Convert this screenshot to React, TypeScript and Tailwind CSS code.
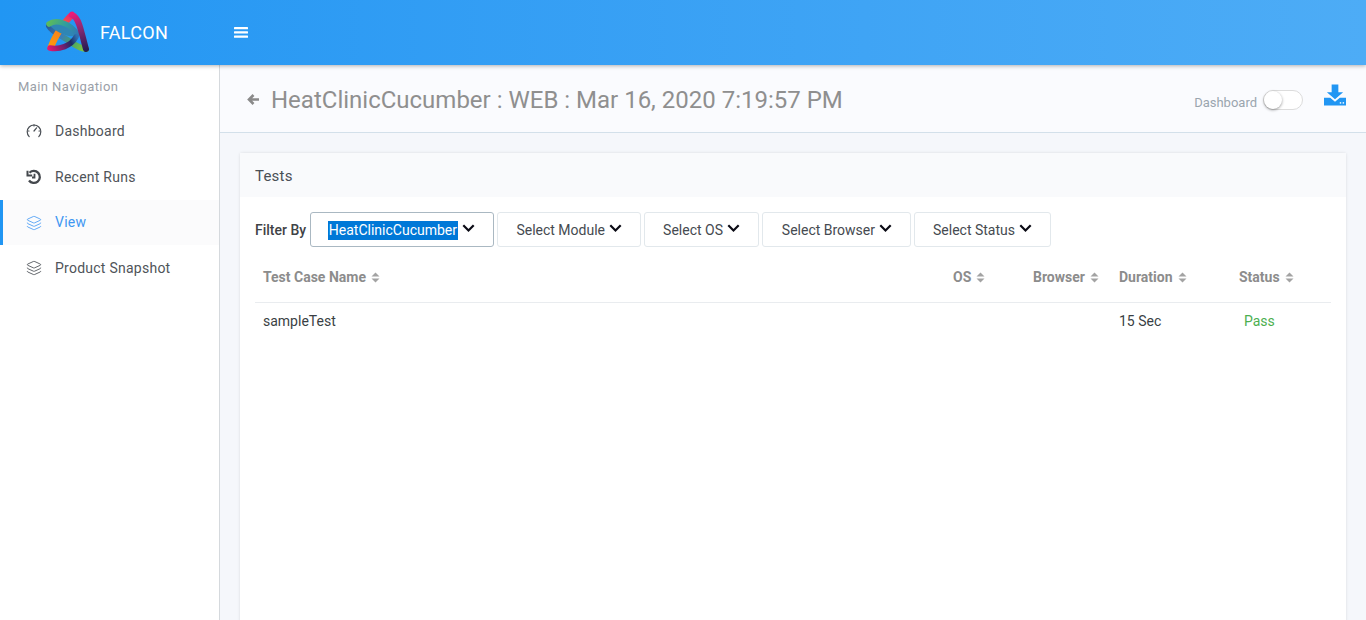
import { Layers } from "lucide-react";

function Logo() {
  return (
    <svg width="46" height="44" viewBox="0 0 46 44" fill="none" strokeLinecap="round">
      <defs>
        <linearGradient id="a" gradientUnits="userSpaceOnUse" x1="5" y1="36" x2="27" y2="3">
          <stop offset="0" stopColor="#ff9a0c" />
          <stop offset="0.5" stopColor="#f5811f" />
          <stop offset="1" stopColor="#ec1b78" />
        </linearGradient>
        <linearGradient id="b" gradientUnits="userSpaceOnUse" x1="27" y1="3" x2="42" y2="40">
          <stop offset="0" stopColor="#ec1b78" />
          <stop offset="0.4" stopColor="#8c2a73" />
          <stop offset="1" stopColor="#1f1b52" />
        </linearGradient>
        <linearGradient id="c" gradientUnits="userSpaceOnUse" x1="3" y1="12" x2="33" y2="27">
          <stop offset="0" stopColor="#5dbb5a" />
          <stop offset="0.5" stopColor="#2f9d9f" />
          <stop offset="1" stopColor="#3273b8" />
        </linearGradient>
        <linearGradient id="d" gradientUnits="userSpaceOnUse" x1="3" y1="14" x2="40" y2="38">
          <stop offset="0" stopColor="#2a5a98" />
          <stop offset="0.4" stopColor="#3a7fb8" />
          <stop offset="0.65" stopColor="#45a06a" />
          <stop offset="1" stopColor="#7cc63f" />
        </linearGradient>
        <linearGradient id="e" gradientUnits="userSpaceOnUse" x1="4" y1="38" x2="32" y2="26">
          <stop offset="0" stopColor="#e3176f" />
          <stop offset="0.45" stopColor="#74206f" />
          <stop offset="0.75" stopColor="#1d2c63" />
          <stop offset="1" stopColor="#2f6fb0" />
        </linearGradient>
      </defs>
      <path d="M4 15C7 21 17 25 24 30C30 34 34 37 41 38" stroke="url(#d)" strokeWidth="6" />
      <path d="M6 36C10 25 20 10 27 4" stroke="url(#a)" strokeWidth="6.500" />
      <path d="M4 14C12 10 26 14 32 24C26 28 12 22 4 14Z" fill="#2f86b4" />
      <path d="M4 13C11 8 25 12 32 23" stroke="url(#c)" strokeWidth="5.500" />
      <path d="M5 37C14 39 26 35 31 26" stroke="url(#e)" strokeWidth="5.500" />
      <path d="M27 4C33 6 35 16 37 23C39 30 40 35 41 38" stroke="url(#b)" strokeWidth="6" />
    </svg>
  );
}

function Gauge() {
  return (
    <svg width="16" height="16" viewBox="0 0 16 16" fill="none" stroke="#4a4f55" strokeWidth="1.200" strokeLinecap="round">
      <path d="M3.200 13.600A6.800 6.800 0 1 1 12.800 13.600" />
      <path d="M8 8L10.600 4.800" />
      <path d="M1.800 8H3M13 8h1.200M8 1.800V3" />
    </svg>
  );
}

function HistoryIcon() {
  return (
    <svg width="16" height="16" viewBox="0 0 16 16" fill="none" stroke="#44484d" strokeWidth="2.300">
      <path d="M3.500 3.800A6 6 0 1 1 3 11.500" />
      <path d="M1.500 1.800V6.500H6.200" strokeWidth="2" />
      <path d="M8.500 4.800V8.500H6" strokeWidth="1.800" />
    </svg>
  );
}

function Chevron() {
  return (
    <svg width="13" height="9" viewBox="0 0 13 9" fill="none" className="shrink-0">
      <path d="M1.300 1.300L6.500 6.500L11.700 1.300" stroke="#0a0a14" strokeWidth="2.200" />
    </svg>
  );
}

function Sort() {
  return (
    <svg width="9" height="11" viewBox="0 0 9 11" className="ml-[5px] inline-block align-[-1px]" fill="#a3a3a3">
      <path d="M4.500 0.500L8.500 4.500H0.500Z" />
      <path d="M4.500 10.500L8.500 6.500H0.500Z" />
    </svg>
  );
}

function NavItem({ icon, label, active }: { icon: React.ReactNode; label: string; active?: boolean }) {
  return (
    <div
      className={
        active
          ? "flex h-[45px] items-center border-l-[3px] border-[#2196f3] bg-[#fbfbfc] pl-[23px] text-[#3f97f2]"
          : "flex h-[46px] items-center pl-[26px] text-[#4f5459]"
      }
    >
      <span className="flex w-[29px] items-center">{icon}</span>
      <span className="text-[14px] tracking-[0.25px]">{label}</span>
    </div>
  );
}

function FilterButton({ label, width, selected }: { label: string; width: string; selected?: boolean }) {
  return (
    <div
      className={`flex h-[35px] items-center justify-end rounded-[3px] border bg-white pr-[18px] text-[14px] text-[#454a50] ${width} ${
        selected ? "border-[#aab8c2]" : "border-[#e2e8ec]"
      }`}
    >
      <span className={selected ? "mt-[1px] bg-[#0078d7] px-[1px] leading-[19px] text-white" : "mt-[1px]"}>{label}</span>
      <span className="ml-[4px] mb-[3px] flex">
        <Chevron />
      </span>
    </div>
  );
}

const columns = "grid grid-cols-[690px_80px_86px_120px_100px]";

export default function App() {
  return (
    <div className="flex h-screen flex-col overflow-hidden bg-[#f5f7fb] font-['Roboto',sans-serif]">
      <header className="relative z-10 flex h-[65px] shrink-0 items-center bg-gradient-to-r from-[#2196f3] to-[#4dacf6] shadow-[0_1px_4px_rgba(0,0,0,0.3)]">
        <div className="ml-[45px] flex w-[189px] items-center">
          <Logo />
          <span className="ml-[9px] text-[18px] tracking-[0.3px] text-white">FALCON</span>
        </div>
        <svg width="14" height="11" viewBox="0 0 14 11" fill="white" className="-mt-[1px]">
          <rect width="14" height="2.200" y="0" rx="0.500" />
          <rect width="14" height="2.200" y="4.300" rx="0.500" />
          <rect width="14" height="2.200" y="8.600" rx="0.500" />
        </svg>
      </header>

      <div className="flex min-h-0 flex-1">
        <aside className="w-[220px] shrink-0 border-r border-[#d5d9dd] bg-white">
          <div className="pt-[14px] pb-[13px] pl-[18px] text-[13px] leading-[16px] tracking-[0.42px] text-[#9aa0a8]">
            Main Navigation
          </div>
          <NavItem icon={<Gauge />} label="Dashboard" />
          <NavItem icon={<HistoryIcon />} label="Recent Runs" />
          <NavItem icon={<Layers size={16} strokeWidth={1.300} color="#4a9df5" />} label="View" active />
          <NavItem icon={<Layers size={16} strokeWidth={1.300} color="#4a4f55" />} label="Product Snapshot" />
        </aside>

        <main className="flex min-w-0 flex-1 flex-col">
          <div className="flex h-[68px] shrink-0 items-center justify-between border-b border-[#d3e0ea] bg-[#fafbfe] pl-[27px] pr-[20px]">
            <div className="flex items-center text-[#8f8f8f]">
              <svg width="12" height="11" viewBox="0 0 12 11" fill="none" stroke="#8a8a8a" strokeWidth="2.600" className="mt-[1px]">
                <path d="M6.500 1L2 5.500L6.500 10M2.500 5.500H12" />
              </svg>
              <h1 className="mt-[2px] ml-[12px] text-[24px] leading-[32px]">HeatClinicCucumber : WEB : Mar 16, 2020 7:19:57 PM</h1>
            </div>
            <div className="flex items-center">
              <span className="mt-[9px] text-[13px] text-[#9aa5ae]">Dashboard</span>
              <div className="mt-[2px] ml-[6px] flex h-[20px] w-[40px] items-center rounded-full border border-[#dcdcdc] bg-white">
                <div className="h-[18px] w-[18px] rounded-full bg-white shadow-[0_1px_3px_rgba(0,0,0,0.4)]" />
              </div>
              <svg width="22" height="22" viewBox="0 0 23 22" fill="#2196f3" className="mb-[7px] ml-[21px]">
                <path d="M8 0H15V8H20L11.500 15.500L3 8H8Z" />
                <path d="M0 14H6.500L11.500 18L16.500 14H23V22H0Z" />
                <rect x="16.500" y="18.500" width="1.500" height="1.500" fill="white" />
                <rect x="19.500" y="18.500" width="1.500" height="1.500" fill="white" />
              </svg>
            </div>
          </div>

          <div className="min-h-0 flex-1 px-[20px] pt-[20px]">
            <section className="h-[600px] rounded-t-[2px] bg-white shadow-[0_0_3px_rgba(0,0,0,0.12)]">
              <div className="flex h-[44px] items-center bg-[#f9fafc] pt-[2px] pl-[15px] text-[15px] tracking-[0.2px] text-[#4a4f55]">
                Tests
              </div>
              <div className="px-[15px] pt-[15px]">
                <div className="flex items-center">
                  <span className="mt-[1px] mr-[3px] w-[52px] text-[14px] font-medium whitespace-nowrap text-[#3f4347]">Filter By</span>
                  <div className="flex gap-[3px]">
                    <FilterButton label="HeatClinicCucumber" width="w-[184px]" selected />
                    <FilterButton label="Select Module" width="w-[144px]" />
                    <FilterButton label="Select OS" width="w-[115px]" />
                    <FilterButton label="Select Browser" width="w-[149px]" />
                    <FilterButton label="Select Status" width="w-[137px]" />
                  </div>
                </div>
                <div className="w-[1076px]">
                  <div className={`${columns} h-[56px] items-center border-b border-[#e9ecef] pt-[6px] text-[14px] font-bold text-[#8c8c8c]`}>
                    <div className="pl-[8px]">Test Case Name<Sort /></div>
                    <div className="pl-[8px]">OS<Sort /></div>
                    <div className="pl-[8px]">Browser<Sort /></div>
                    <div className="pl-[8px]">Duration<Sort /></div>
                    <div className="pl-[8px]">Status<Sort /></div>
                  </div>
                  <div className={`${columns} h-[37px] items-center text-[14px] text-[#3a3f44]`}>
                    <div className="pl-[8px]">sampleTest</div>
                    <div />
                    <div />
                    <div className="pl-[8px]">15 Sec</div>
                    <div className="pl-[13px] text-[#4caf50]">Pass</div>
                  </div>
                </div>
              </div>
            </section>
          </div>
        </main>
      </div>
    </div>
  );
}
